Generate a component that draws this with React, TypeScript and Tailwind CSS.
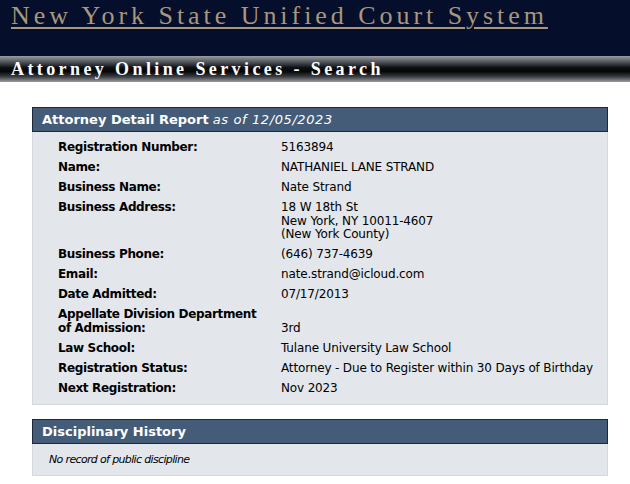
import React from "react";

const rows: { label: React.ReactNode; value: React.ReactNode }[] = [
  { label: "Registration Number:", value: "5163894" },
  { label: "Name:", value: "NATHANIEL LANE STRAND" },
  { label: "Business Name:", value: "Nate Strand" },
  {
    label: "Business Address:",
    value: (
      <>
        18 W 18th St
        <br />
        New York, NY 10011-4607
        <br />
        (New York County)
      </>
    ),
  },
  { label: "Business Phone:", value: "(646) 737-4639" },
  { label: "Email:", value: "nate.strand@icloud.com" },
  { label: "Date Admitted:", value: "07/17/2013" },
  {
    label: (
      <>
        Appellate Division Department
        <br />
        of Admission:
      </>
    ),
    value: "3rd",
  },
  { label: "Law School:", value: "Tulane University Law School" },
  { label: "Registration Status:", value: "Attorney - Due to Register within 30 Days of Birthday" },
  { label: "Next Registration:", value: "Nov 2023" },
];

export default function App() {
  return (
    <div className="w-[630px] h-[484px] bg-white overflow-hidden" style={{ fontFamily: '"DejaVu Sans", sans-serif' }}>
      <div className="h-[56px] bg-[#050f2c] pl-[11px] pt-[1px]">
        <a
          href="#"
          className="text-[26px] leading-[30px] tracking-[3.95px] text-[#a8977b] underline decoration-[2px] underline-offset-[3px]"
          style={{ fontFamily: '"Liberation Serif", serif' }}
        >
          New York State Unified Court System
        </a>
      </div>
      <div className="h-[26px] bg-[linear-gradient(to_bottom,#9a9ea5_0%,#6a6e74_15%,#0c0f12_45%,#050708_60%,#3b3e43_80%,#9a9da2_100%)] pl-[11px]">
        <span
          className="text-[18px] leading-[26px] font-bold tracking-[3.4px] text-white"
          style={{ fontFamily: '"Liberation Serif", serif' }}
        >
          Attorney Online Services - Search
        </span>
      </div>

      <div className="ml-[32px] w-[576px] mt-[25px]">
        <div className="bg-[#445c78] border border-[#1c2838] h-[25px] pl-[9px] text-white text-[13px] leading-[23px]">
          <span className="font-bold">Attorney Detail Report</span>{" "}
          <i className="tracking-[0.6px]">as of 12/05/2023</i>
        </div>
        <div className="bg-[#e3e7ec] border border-t-0 border-[#d3d8de] pt-[6px] pb-[5px]">
          <table className="border-collapse text-[12px] leading-[13.5px] text-black ml-[22px]">
            <tbody>
              {rows.map((r, i) => (
                <tr key={i}>
                  <td className="font-bold align-top w-[223px] px-[3px] py-[3.25px] tracking-[-0.35px]">{r.label}</td>
                  <td className="align-bottom px-[3px] py-[3.25px] tracking-[-0.15px]">{r.value}</td>
                </tr>
              ))}
            </tbody>
          </table>
        </div>
      </div>

      <div className="ml-[32px] w-[576px] mt-[14px]">
        <div className="bg-[#445c78] border border-[#1c2838] h-[25px] pl-[9px] text-white text-[13px] leading-[23px] font-bold">
          Disciplinary History
        </div>
        <div className="bg-[#e3e7ec] border border-t-0 border-[#d3d8de] h-[32px] pl-[16px] text-[11px] leading-[32px] italic tracking-[-0.65px]">
          No record of public discipline
        </div>
      </div>
    </div>
  );
}
